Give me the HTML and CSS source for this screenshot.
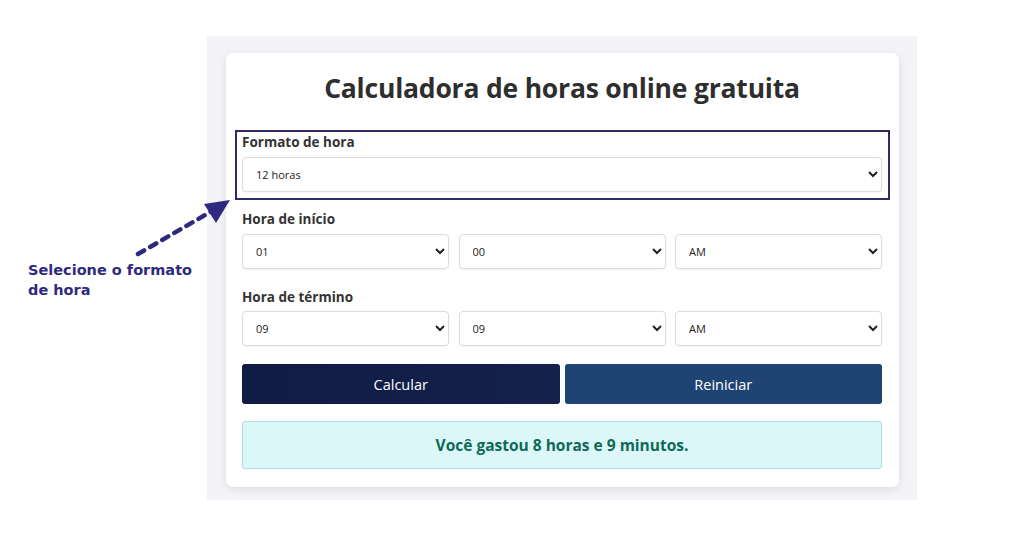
FILE: index.html
```html
<!DOCTYPE html>
<html lang="pt">
<head>
<meta charset="utf-8">
<title>Calculadora de horas</title>
<link rel="stylesheet" href="styles.css">
</head>
<body>
<div class="stage">
  <div class="panel">
    <div class="card">
      <h1 class="title">Calculadora de horas online gratuita</h1>
      <div class="highlight">
        <div class="label">Formato de hora</div>
        <select class="sel"><option>12 horas</option><option>24 horas</option></select>
      </div>
      <div class="group g1">
        <div class="label">Hora de início</div>
        <div class="row">
          <select class="sel"><option>01</option></select>
          <select class="sel"><option>00</option></select>
          <select class="sel"><option>AM</option></select>
        </div>
      </div>
      <div class="group g2">
        <div class="label">Hora de término</div>
        <div class="row">
          <select class="sel"><option>09</option></select>
          <select class="sel"><option>09</option></select>
          <select class="sel"><option>AM</option></select>
        </div>
      </div>
      <div class="buttons">
        <button class="btn btn-calc">Calcular</button>
        <button class="btn btn-reset">Reiniciar</button>
      </div>
      <div class="result">Você gastou 8 horas e 9 minutos.</div>
    </div>
  </div>
  <div class="note">Selecione o formato<br>de hora</div>
  <svg class="arrow" width="110" height="70" viewBox="0 0 110 70">
    <line x1="18" y1="62" x2="92" y2="19" stroke="#2f2a80" stroke-width="4.5" stroke-linecap="round" stroke-dasharray="7 7"/>
    <polygon points="110,8 84,12 96,31" fill="#2f2a80"/>
  </svg>
</div>
</body>
</html>
```
FILE: styles.css
```css
* { box-sizing: border-box; }
html, body { margin: 0; padding: 0; background: #ffffff; }
body { width: 1024px; height: 536px; overflow: hidden; font-family: "Open Sans", "DejaVu Sans", sans-serif; }
.stage { position: relative; width: 1024px; height: 536px; padding-top: 36px; }
.panel {
  margin-left: 207px;
  width: 710px;
  height: 464px;
  background: #f4f4f8;
  padding: 17px 18px 13px 19px;
}
.card {
  background: #ffffff;
  border-radius: 7px;
  box-shadow: 0 2px 8px rgba(0,0,0,0.10);
  width: 673px;
  height: 434px;
  padding: 17px 17px 18px 16px;
}
.title {
  margin: 0 0 24px 0;
  font-size: 26.5px;
  line-height: 36px;
  font-weight: 700;
  color: #2e2e2e;
  text-align: center;
  letter-spacing: -0.2px;
}
.label {
  font-size: 13.5px;
  font-weight: 700;
  line-height: 16px;
  color: #333333;
  margin-bottom: 7px;
}
.highlight {
  margin: 0 -8px 0 -7px;
  border: 2px solid #2e2a64;
  padding: 2px 6px 6px 5px;
}
.sel {
  display: block;
  width: 100%;
  height: 35px;
  border: 1px solid #dcdcdc;
  border-radius: 4px;
  background: #ffffff;
  font-family: "Open Sans", "DejaVu Sans", sans-serif;
  font-size: 11px;
  color: #222222;
  padding: 0 8px 0 9px;
  box-shadow: 0 1px 2px rgba(0,0,0,0.06);
}
.g1 { margin-top: 11px; }
.g2 { margin-top: 20px; }
.g2 .label { margin-bottom: 6px; }
.row {
  display: grid;
  grid-template-columns: 1fr 1fr 1fr;
  column-gap: 9.5px;
}
.buttons {
  margin-top: 18px;
  display: grid;
  grid-template-columns: 1fr 1fr;
  column-gap: 5px;
}
.btn {
  height: 40px;
  border: none;
  border-radius: 3px;
  color: #ffffff;
  font-family: "Open Sans", "DejaVu Sans", sans-serif;
  font-size: 14.5px;
}
.btn-calc { background: linear-gradient(90deg, #111c45, #14214b); }
.btn-reset { background: #1f4373; }
.result {
  margin-top: 17px;
  height: 48px;
  background: #dcf7fa;
  border: 1px solid #a9e2e4;
  border-radius: 3px;
  color: #0e6a55;
  font-size: 15.5px;
  font-weight: 700;
  display: flex;
  align-items: center;
  justify-content: center;
}
.note {
  position: absolute;
  left: 28px;
  top: 260px;
  color: #2f2a7e;
  font-family: "DejaVu Sans", "Open Sans", sans-serif;
  font-weight: 700;
  font-size: 14.5px;
  line-height: 20px;
}
.arrow {
  position: absolute;
  left: 120px;
  top: 192px;
}
```
